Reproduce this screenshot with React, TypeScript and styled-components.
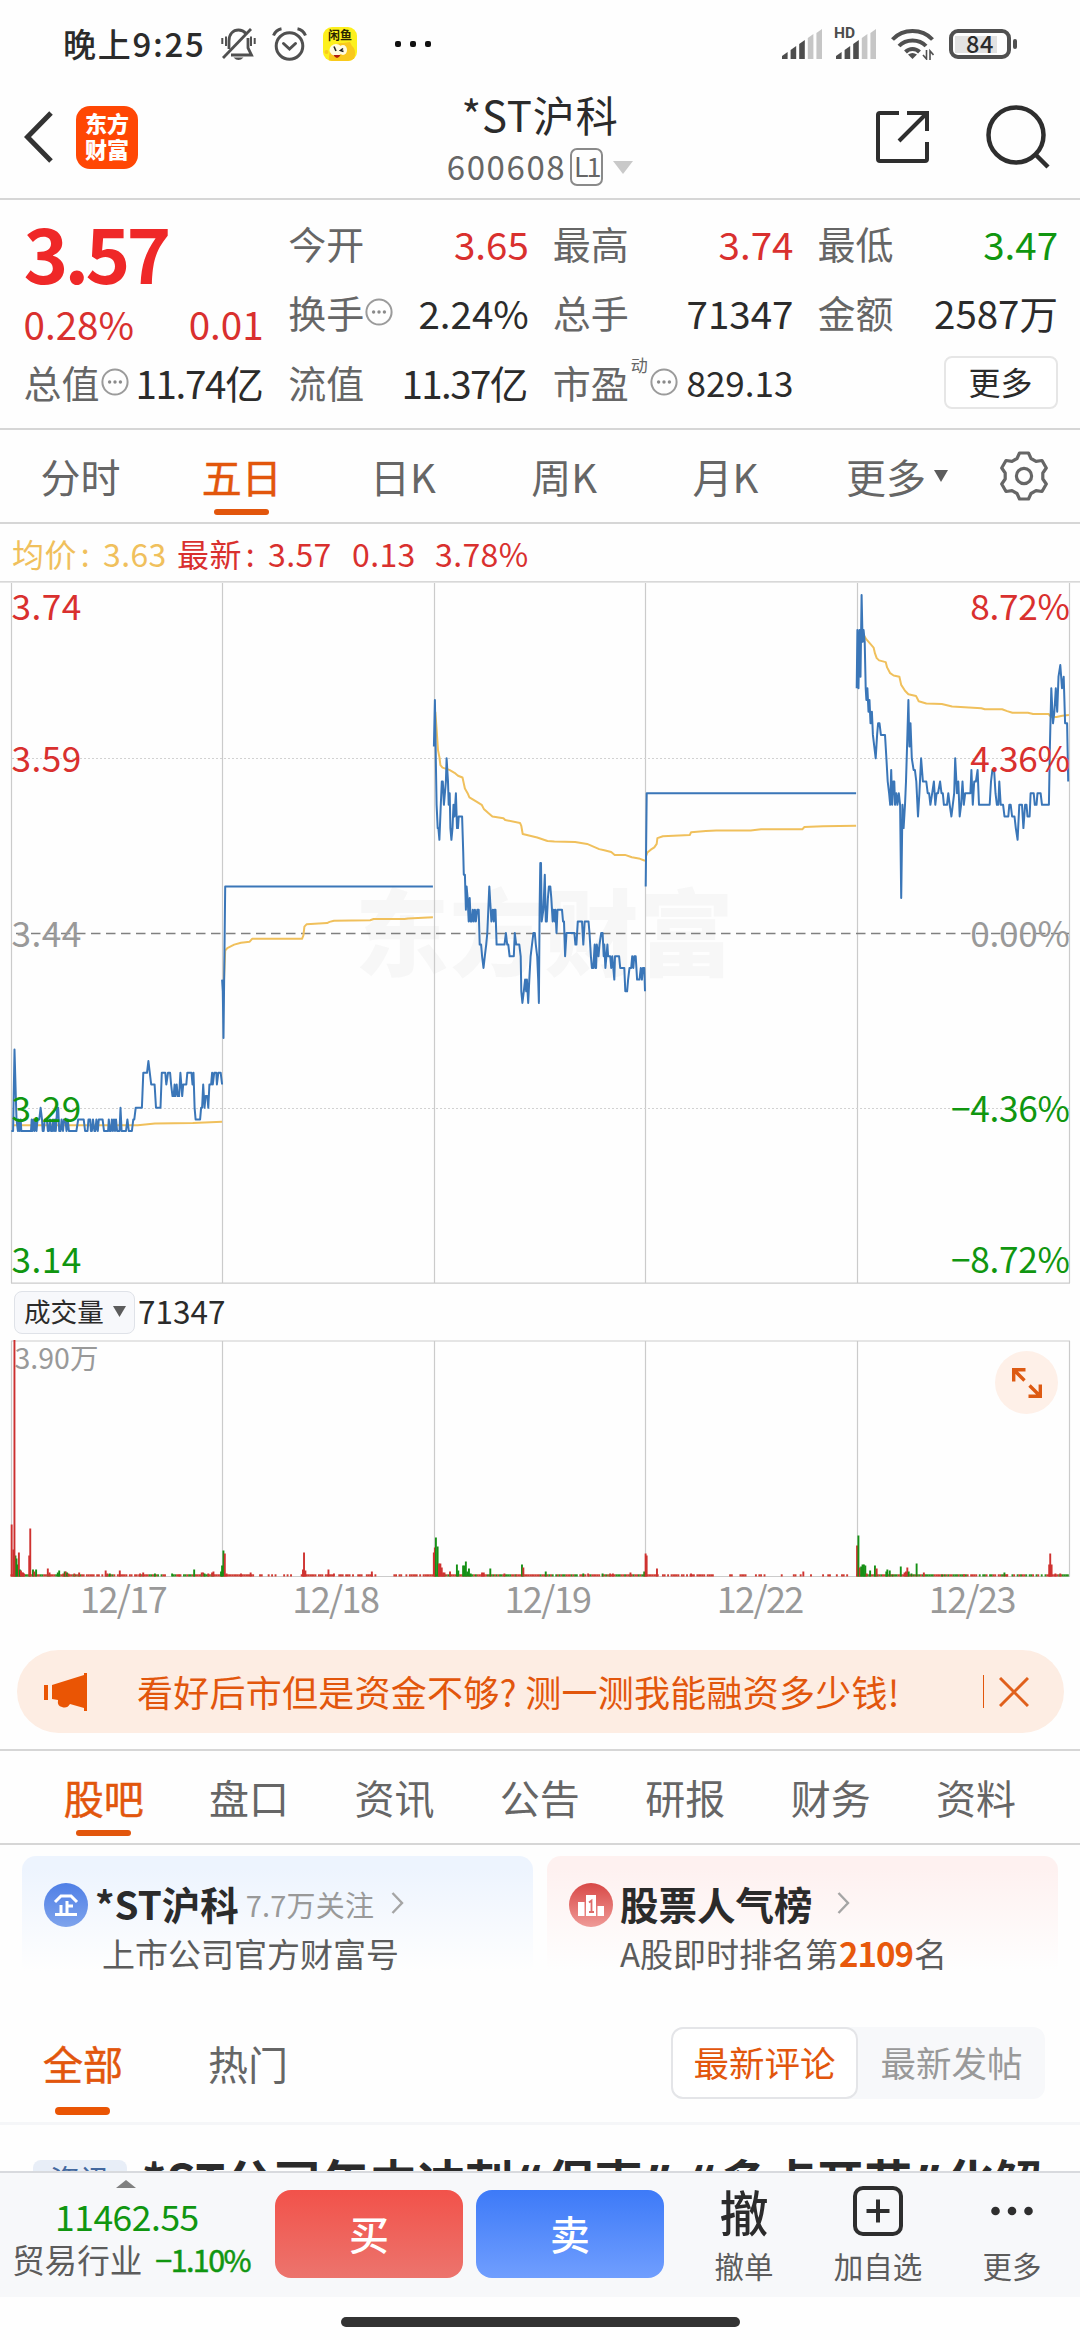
import React from "react";
import styled, { createGlobalStyle } from "styled-components";

const C = {
  ink: "#2b2b2b",
  grey: "#666666",
  light: "#999999",
  line: "#d6d6d6",
  red: "#d9302e",
  green: "#109610",
  orange: "#e2560c",
  blue: "#3a76b8",
  gold: "#f0c05c",
};

const GlobalStyle = createGlobalStyle`
  * { box-sizing: border-box; }
  body {
    margin: 0;
    background: #fefefe;
    font-family: "Noto Sans CJK SC", "Noto Sans", sans-serif;
    color: ${C.ink};
    -webkit-font-smoothing: antialiased;
  }
  svg { display: block; flex: none; }
`;

const Screen = styled.div`
  width: 1080px;
  height: 2340px;
  overflow: hidden;
  display: flex;
  flex-direction: column;
  background: #fefefe;
  white-space: nowrap;
`;

/* ---------- status bar ---------- */
const StatusBar = styled.div`
  height: 88px;
  flex: none;
  display: flex;
  align-items: center;
  padding: 0 63px;
`;
const Clock = styled.span`
  width: 158px;
  font-size: 33px;
  font-weight: 500;
  line-height: 40px;
  padding-bottom: 3px;
  letter-spacing: 1.7px;
`;
const StatusIcons = styled.div<{ $gap: number }>`
  display: flex;
  align-items: center;
  gap: ${(p) => p.$gap}px;
`;
const AppBadge = styled.div`
  width: 34px;
  height: 34px;
  border-radius: 9px;
  background: #fdf01d;
  display: flex;
  flex-direction: column;
  align-items: center;
  overflow: hidden;
`;
const AppBadgeName = styled.span`
  font-size: 12px;
  line-height: 12px;
  font-weight: 700;
  color: #2a2600;
  margin-top: 2px;
`;
const MoreDots = styled.div`
  display: flex;
  gap: 9px;
  margin-left: 38px;
  & > i {
    width: 6px;
    height: 6px;
    border-radius: 2px;
    background: #111;
  }
`;
const StatusRight = styled.div`
  margin-left: auto;
  display: flex;
  align-items: center;
`;
const HdSignal = styled.div`
  position: relative;
  margin: 0 14px 0 13px;
`;
const HdMark = styled.span`
  position: absolute;
  left: -2px;
  top: -3px;
  font: 700 15.5px/15px Roboto, sans-serif;
  color: #4d4d4d;
`;
const Battery = styled.div`
  width: 62px;
  height: 30px;
  margin: 0 2px 0 15px;
  border: 4px solid #505050;
  border-radius: 9px;
  display: flex;
  align-items: center;
  justify-content: center;
  font-size: 23.5px;
  line-height: 22px;
  font-weight: 500;
  letter-spacing: 0.6px;
  padding-bottom: 2px;
  background: linear-gradient(90deg, #e2e2e2 0 42px, transparent 42px) 2px 3px / 42px 17px no-repeat;
`;
const BatteryCap = styled.i`
  width: 4px;
  height: 10px;
  border-radius: 2px;
  background: #505050;
`;

/* ---------- title bar ---------- */
const TitleBar = styled.header`
  height: 112px;
  flex: none;
  display: grid;
  grid-template-columns: 300px 1fr 300px;
  border-bottom: 2px solid ${C.line};
`;
const TitleLeft = styled.div`
  display: flex;
  align-items: center;
  padding: 0 0 12px 24px;
  gap: 23px;
`;
const BrandLogo = styled.div`
  width: 62px;
  height: 63px;
  border-radius: 14px;
  background: #ff4704;
  color: #fff;
  font-size: 22px;
  font-weight: 900;
  line-height: 26px;
  padding: 3px 0 0 9px;
  white-space: pre;
`;
const TitleCenter = styled.div`
  display: flex;
  flex-direction: column;
  align-items: center;
`;
const StockName = styled.h1`
  margin: 0;
  font-size: 42px;
  line-height: 52px;
  font-weight: 400;
  letter-spacing: 0.8px;
`;
const CodeRow = styled.div`
  display: flex;
  align-items: center;
  height: 38px;
  margin-top: 8px;
  color: ${C.grey};
  font-size: 33px;
`;
const Code = styled.span`
  line-height: 38px;
  padding-bottom: 3px;
  letter-spacing: 1.6px;
`;
const LevelTag = styled.span`
  width: 33px;
  height: 38px;
  margin: 0 10px 0 4px;
  border: 2px solid #8a8a8a;
  border-radius: 7px;
  font-size: 27px;
  line-height: 31px;
  text-align: center;
  letter-spacing: -2px;
`;
const TitleRight = styled.div`
  display: flex;
  align-items: center;
  justify-content: flex-end;
  gap: 56px;
  padding: 0 30px 12px 0;
`;

/* ---------- quote panel ---------- */
const QuotePanel = styled.section`
  height: 230px;
  flex: none;
  display: grid;
  grid-template-columns: repeat(4, 1fr);
  column-gap: 24.5px;
  padding: 8px 22.5px 0 23.5px;
  border-bottom: 2px solid ${C.line};
`;
const QuoteColumn = styled.div`
  display: flex;
  flex-direction: column;
`;
const Cell = styled.div`
  height: 69.5px;
  display: flex;
  align-items: center;
  font-size: 38px;
  line-height: 60px;
`;
const Label = styled.span`
  color: ${C.grey};
  margin-right: 1px;
`;
const Value = styled.span<{ $color?: string; $size?: number; $track?: number }>`
  margin-left: auto;
  color: ${(p) => p.$color ?? C.ink};
  font-size: ${(p) => p.$size ?? 38.5}px;
  letter-spacing: ${(p) => p.$track ?? 0}px;
  margin-right: ${(p) => -(p.$track ?? 0.5)}px;
`;
const Price = styled.div`
  height: 87px;
  font-size: 76px;
  line-height: 87px;
  font-weight: 700;
  color: #ef2828;
  letter-spacing: -3.8px;
`;
const ChangeRow = styled.div`
  height: 52px;
  padding-top: 5px;
  display: flex;
  justify-content: space-between;
  font-size: 38.6px;
  line-height: 46px;
  color: ${C.red};
`;
const DynMark = styled.sup`
  font-size: 17px;
  line-height: 20px;
  align-self: flex-start;
  margin: 8px 2px 0 1px;
  color: ${C.grey};
`;
const MoreButton = styled.button`
  margin: 9px 0 0 auto;
  width: 114px;
  height: 53px;
  border: 2px solid #e6e6e6;
  border-radius: 8px;
  background: #fff;
  color: ${C.ink};
  font: inherit;
  font-size: 32px;
  line-height: 40px;
  padding: 0 0 4px;
`;

/* ---------- tabs ---------- */
const PeriodTabs = styled.nav`
  height: 94px;
  flex: none;
  display: flex;
  border-bottom: 2px solid ${C.line};
`;
const SectionTabs = styled.nav`
  height: 96px;
  flex: none;
  display: flex;
  padding: 0 31px;
  border-top: 2px solid ${C.line};
  border-bottom: 2px solid ${C.line};
`;
const Tab = styled.div<{ $width: number; $on?: boolean }>`
  width: ${(p) => p.$width}px;
  display: flex;
  flex-direction: column;
  align-items: center;
  color: ${(p) => (p.$on ? C.orange : C.grey)};
  font-size: 40px;
  line-height: 92px;
  -webkit-text-stroke: ${(p) => (p.$on ? 0.5 : 0)}px ${C.orange};
  &::after {
    content: "";
    width: 55px;
    height: 6px;
    margin-top: -13px;
    border-radius: 3px;
    background: ${(p) => (p.$on ? C.orange : "transparent")};
  }
`;
const TabMore = styled.div`
  display: flex;
  align-items: center;
  margin-left: 40px;
  width: 154px;
  gap: 8px;
  font-size: 40px;
  line-height: 92px;
  color: ${C.grey};
`;
const GearSlot = styled.div`
  padding-top: 21px;
`;

/* ---------- chart ---------- */
const Legend = styled.div`
  height: 57px;
  flex: none;
  display: flex;
  padding-left: 12px;
  font-size: 32px;
  line-height: 58px;
  color: ${C.red};
  letter-spacing: 0.4px;
`;
const LegendItem = styled.span<{ $width: number; $color?: string }>`
  width: ${(p) => p.$width}px;
  color: ${(p) => p.$color ?? C.red};
`;
const Colon = styled.span`
  padding-left: 4px;
`;
const Plot = styled.svg`
  flex: none;
`;
const VolumeHead = styled.div`
  height: 56px;
  flex: none;
  display: flex;
  align-items: center;
  padding: 0 14px;
  font-size: 31.5px;
  line-height: 40px;
`;
const IndicatorSelect = styled.div`
  width: 121px;
  height: 43px;
  margin-right: 3px;
  padding: 0 0 2px 9px;
  display: flex;
  align-items: center;
  gap: 9px;
  border: 1.5px solid #dfe2e8;
  border-radius: 8px;
  background: #f7f8fb;
  font-size: 26.6px;
`;
const VolumeValue = styled.span`
  padding-bottom: 4px;
`;
const VolumeArea = styled.div`
  position: relative;
  height: 238px;
  flex: none;
`;
const ExpandButton = styled.div`
  position: absolute;
  left: 995px;
  top: 11px;
  width: 63px;
  height: 63px;
  border-radius: 50%;
  background: #fef0e8;
  display: grid;
  place-items: center;
`;
const DateAxis = styled.div`
  height: 72px;
  flex: none;
  display: grid;
  grid-template-columns: repeat(5, 212.2px);
  padding-left: 17px;
  font-size: 36px;
  line-height: 39px;
  color: ${C.light};
  text-align: center;
  letter-spacing: -1.6px;
`;

/* ---------- banner ---------- */
const Banner = styled.div`
  height: 83px;
  flex: none;
  margin: 0 16px 16px 17px;
  border-radius: 42px;
  background: #fdede3;
  display: flex;
  align-items: center;
  padding: 0 35px 0 27px;
  color: ${C.orange};
`;
const BannerText = styled.span`
  flex: 1;
  margin-left: 50px;
  font-size: 36px;
  line-height: 60px;
  padding-bottom: 1px;
  letter-spacing: 0.25px;
`;
const BannerRule = styled.i`
  width: 1.5px;
  height: 33px;
  margin-right: 15px;
  background: ${C.orange};
`;

/* ---------- entry cards ---------- */
const Cards = styled.div`
  flex: none;
  height: 182px;
  display: grid;
  grid-template-columns: 511px 511px;
  column-gap: 14px;
  padding: 11px 22px 0;
`;
const Card = styled.div<{ $tint: string }>`
  height: 122px;
  border-radius: 14px;
  background: linear-gradient(180deg, ${(p) => p.$tint} 10%, #fefefe 94%);
  padding: 17px 22px 0;
`;
const CardHead = styled.div`
  height: 60px;
  display: flex;
  align-items: center;
`;
const RoundIcon = styled.div<{ $from: string; $to: string }>`
  width: 44px;
  height: 44px;
  margin: 3px 7px 0 0;
  border-radius: 50%;
  background: linear-gradient(180deg, ${(p) => p.$from}, ${(p) => p.$to});
  display: grid;
  place-items: center;
`;
const CardTitle = styled.span`
  font-size: 38.5px;
  line-height: 60px;
  font-weight: 700;
`;
const CardMeta = styled.span`
  margin: 0 17px 0 7px;
  padding-top: 2px;
  font-size: 29px;
  letter-spacing: 0.2px;
  color: ${C.light};
`;
const CardSub = styled.div`
  padding-left: 58px;
  margin-top: -2px;
  font-size: 33px;
  line-height: 44px;
  color: #5c5c5c;
`;
const RankCardSub = styled(CardSub)`
  padding-left: 51px;
`;
const Rank = styled.b`
  color: #e8590c;
  letter-spacing: -1px;
  margin: 0 1px;
`;

/* ---------- feed ---------- */
const FilterRow = styled.div`
  height: 98px;
  flex: none;
  display: flex;
  align-items: flex-start;
  border-bottom: 3px solid #f5f6f8;
  padding: 0 35px 0 43px;
`;
const Filter = styled.div<{ $on?: boolean }>`
  width: 165px;
  height: 93px;
  font-size: 40px;
  line-height: 72px;
  -webkit-text-stroke: ${(p) => (p.$on ? 0.5 : 0)}px ${C.orange};
  color: ${(p) => (p.$on ? C.orange : C.grey)};
  &::after {
    content: "";
    display: block;
    width: 55px;
    height: 8px;
    margin: 8px 0 0 12px;
    border-radius: 4px;
    background: ${(p) => (p.$on ? "#ea5504" : "transparent")};
  }
`;
const Segment = styled.div`
  width: 374px;
  height: 72px;
  margin-left: auto;
  border-radius: 12px;
  background: #f7f8fa;
  display: grid;
  grid-template-columns: 1fr 1fr;
`;
const SegmentItem = styled.div<{ $on?: boolean }>`
  text-align: center;
  font-size: 35.5px;
  line-height: 65px;
  border-radius: 12px;
  border: 2px solid ${(p) => (p.$on ? "#e4e5e8" : "transparent")};
  background: ${(p) => (p.$on ? "#fff" : "transparent")};
  color: ${(p) => (p.$on ? C.orange : C.light)};
`;
const Feed = styled.div`
  height: 46px;
  flex: none;
  overflow: hidden;
  display: flex;
  align-items: flex-start;
  padding: 35px 0 0 33px;
`;
const FeedTag = styled.span`
  width: 94px;
  height: 52px;
  border-radius: 8px;
  background: #e8eef7;
  color: #44699f;
  font-size: 30px;
  line-height: 36px;
  text-align: center;
`;
const FeedTitle = styled.span`
  margin: -11px 0 0 15px;
  font-size: 48px;
  line-height: 60px;
  font-weight: 700;
`;
const Quoted = styled.span`
  font-family: "Noto Sans", sans-serif;
  padding: 0 6px;
`;

/* ---------- bottom bar ---------- */
const BottomBar = styled.footer`
  height: 126px;
  flex: none;
  display: flex;
  border-top: 2px solid #d8dade;
  background: #f7f8fa;
`;
const IndexBox = styled.div`
  width: 275px;
  display: flex;
  flex-direction: column;
  padding: 7px 0 0 12px;
`;
const IndexValue = styled.div`
  margin: 6px 0 0 43px;
  font-size: 35.5px;
  line-height: 44px;
  color: ${C.green};
  letter-spacing: -0.5px;
`;
const IndexRow = styled.div`
  display: flex;
  align-items: center;
  gap: 13px;
  font-size: 32.6px;
  line-height: 44px;
  margin-top: -1px;
  color: #5c5c5c;
`;
const IndexChange = styled.span`
  font-size: 30.5px;
  color: ${C.green};
  letter-spacing: -1.6px;
  -webkit-text-stroke: 0.5px ${C.green};
`;
const TradeButton = styled.div<{ $from: string; $to: string }>`
  width: 188px;
  height: 88px;
  margin: 17px 13px 0 0;
  border-radius: 16px;
  background: linear-gradient(180deg, ${(p) => p.$from}, ${(p) => p.$to});
  color: #fff;
  font-size: 40px;
  font-weight: 500;
  line-height: 86px;
  text-align: center;
`;
const Action = styled.div`
  width: 134px;
  display: flex;
  flex-direction: column;
  align-items: center;
  font-size: 29.5px;
  line-height: 40px;
  color: #5c5c5c;
`;
const ActionIcon = styled.div`
  height: 72px;
  display: flex;
  align-items: center;
  padding-top: 4px;
  font-size: 49px;
  font-weight: 500;
  line-height: 60px;
  color: ${C.ink};
`;
const HomeArea = styled.div`
  flex: 1;
  display: flex;
  justify-content: center;
  padding-top: 20px;
`;
const HomeBar = styled.i`
  width: 399px;
  height: 10px;
  border-radius: 5px;
  background: #333;
`;

/* ---------- icons ---------- */
const Signal = () => (
  <svg width="41" height="30" viewBox="0 0 41 30">
    {[7, 13, 19, 25, 30].map((h, i) => (
      <path
        key={h}
        d={`M${i * 8.6} 30V${30 - h + 4}L${i * 8.6 + 5.6} ${30 - h}V30Z`}
        fill={i < 3 ? "#4d4d4d" : "#c6c6c6"}
      />
    ))}
  </svg>
);
const Triangle = ({ w, h, color }: { w: number; h: number; color: string }) => (
  <svg width={w} height={h}>
    <path d={`M0 0H${w}L${w / 2} ${h}Z`} fill={color} />
  </svg>
);
const Info = () => (
  <svg width="28" height="28" viewBox="0 0 28 28">
    <circle cx="14" cy="14" r="12.6" fill="none" stroke="#9b9b9b" strokeWidth="2" />
    {[8.6, 14, 19.4].map((x) => (
      <circle key={x} cx={x} cy="14" r="1.7" fill="#8a8a8a" />
    ))}
  </svg>
);
const Chevron = () => (
  <svg width="13" height="22" viewBox="0 0 13 22" fill="none" stroke="#a5a5a5" strokeWidth="2.4">
    <path d="M1.5 1L11 11L1.5 21" />
  </svg>
);

/* ---------- chart data ---------- */
// Prices are [time, cents away from 3.44]; time runs 2.904 units per pixel.
const UNIT = 2.904;
type Point = [number, number];
const parse = (s: string): Point[] =>
  s.trim().split(/\s+/).map((p) => p.split(",").map(Number) as Point);

const PRICE = [
  `33,-17 38,-17 42,-10 46,-14 48,-16 52,-17 54,-16 57,-17 60,-16 62,-17 90,-17 92,-16 94,-17 98,-16 100,-17 103,-16 106,-17 109,-16 114,-16 118,-15 122,-16 124,-17 127,-17 130,-16 136,-16 139,-17 142,-17 145,-16 148,-17 152,-17 154,-16 157,-17 160,-16 162,-17 166,-15 169,-15 172,-17 176,-17 179,-16 183,-17 186,-16 190,-16 193,-17 197,-16 200,-17 222,-17 227,-16 243,-16 247,-17 254,-17 257,-16 262,-16 264,-17 267,-17 270,-16 274,-17 277,-17 280,-16 284,-17 287,-16 298,-16 302,-17 314,-17 316,-16 319,-17 322,-17 325,-16 328,-17 331,-16 334,-17 337,-16 340,-17 347,-17 350,-15 353,-17 366,-17 370,-16 374,-17 383,-17 387,-16 390,-16 394,-15 412,-15 416,-12 427,-12 431,-11 435,-12 439,-13 449,-13 453,-15 466,-15 470,-12 480,-12 483,-13 488,-12 494,-12 497,-13 501,-14 504,-14 507,-13 509,-14 513,-13 516,-14 520,-14 524,-12 529,-14 532,-13 541,-13 544,-12 556,-12 559,-13 562,-12 565,-15 568,-16 581,-16 584,-15 587,-15 590,-13 594,-15 597,-14 602,-14 605,-15 608,-13 613,-13 616,-12 618,-13 622,-12 628,-12 630,-13 634,-12 641,-12 645,-13`,
  `645,-4 647,-5 649,-9 654,4 1257,4`,
  `1260,16 1263,20 1266,14 1268,11 1271,9 1273,9 1276,8 1280,11 1283,13 1286,13 1289,11 1292,12 1295,13 1297,15 1301,13 1303,11 1306,12 1308,9 1311,8 1314,9 1317,11 1320,10 1324,12 1327,9 1330,9 1332,10 1342,10 1345,7 1347,5 1350,5 1353,2 1355,4 1358,3 1361,1 1364,3 1367,1 1370,1 1373,2 1376,1 1379,2 1382,1 1386,2 1390,2 1393,-1 1397,-1 1400,-2 1404,-3 1408,-2 1412,-1 1415,0 1418,2 1421,4 1425,2 1427,1 1431,2 1434,1 1436,2 1439,2 1442,-1 1465,-1 1469,0 1473,-1 1476,-1 1480,-2 1492,-2 1495,0 1499,-1 1508,-1 1512,-2 1514,-5 1517,-6 1521,-5 1525,-4 1528,-5 1530,-4 1534,-6 1537,-4 1541,-2 1545,-1 1549,0 1553,0 1556,-1 1560,-2 1563,-4 1565,-6 1567,2 1569,6 1571,6 1573,1 1578,2 1582,5 1585,1 1588,1 1591,3 1594,4 1598,4 1601,3 1605,1 1608,2 1611,1 1613,2 1616,0 1619,2 1632,2 1635,1 1638,1 1641,-2 1645,0 1668,0 1671,-1 1674,-1 1678,1 1690,1 1694,-1 1698,1 1709,1 1712,0 1716,-2 1719,-3 1723,-3 1727,-1 1729,-3 1731,-3 1733,-1 1738,-2 1741,-1 1746,0 1750,0 1753,-2 1755,-1 1758,-3 1761,-2 1764,-1 1766,-2 1772,-2 1775,-3 1778,-2 1781,-3 1784,-4 1786,-2 1798,-2 1801,-3 1813,-3 1816,-5 1821,-5 1824,-4 1828,-3 1833,-3 1836,-2 1839,-3 1842,-2 1846,-2 1850,-4 1857,-4 1861,-3 1864,-4 1867,-3 1871,-3 1873,-5`,
  `1875,4 1878,12 2486,12`,
  `2488,21 2490,26 2493,21 2496,26 2499,22 2502,29 2505,25 2508,26 2511,25 2514,21 2516,20 2519,21 2522,19 2525,20 2528,18 2532,19 2535,17 2539,16 2543,15 2547,17 2550,18 2554,18 2558,17 2570,17 2574,15 2578,13 2582,12 2585,11 2588,14 2591,11 2594,13 2597,13 2599,11 2603,12 2606,11 2610,12 2614,11 2617,3 2621,11 2624,9 2628,11 2631,13 2635,17 2638,20 2641,16 2644,18 2648,15 2653,14 2657,14 2661,13 2666,10 2670,12 2675,15 2680,13 2690,13 2694,12 2698,12 2702,11 2707,12 2712,13 2716,11 2720,12 2724,12 2730,13 2734,12 2738,12 2741,11 2750,11 2754,12 2758,11 2763,10 2767,11 2771,12 2774,15 2779,12 2783,13 2787,10 2791,11 2795,13 2799,11 2803,12 2818,12 2821,14 2825,11 2829,13 2834,13 2839,14 2843,11 2874,11 2878,13 2882,14 2887,14 2891,12 2895,11 2899,11 2902,13 2906,11 2913,11 2917,10 2928,10 2931,11 2935,11 2939,10 2946,10 2950,9 2955,8 2960,11 2968,11 2972,9 2977,11 2981,11 2984,10 2990,10 2993,12 3002,12 3005,11 3010,11 3013,12 3022,12 3026,11 3046,11 3049,16 3053,21 3058,18 3062,19 3066,21 3070,19 3074,22 3079,23 3084,21 3089,22 3093,18 3099,18 3102,13`,
].map(parse);

const AVERAGE = [
  `38,-16.5 400,-16.5 450,-16.35 560,-16.3 645,-16.2`,
  `649,-5 654,-1.5 660,-1.3 670,-1.15 680,-1 700,-.83 725,-.75 732,-.5 877,-.5 881,-.2 884,.55 890,.75 950,.85 957,.95 970,1.05 1075,1.1 1085,1.2 1175,1.2 1185,1.25 1257,1.35`,
  `1264,19 1268,17.5 1272,15.7 1276,15.1 1279,14.4 1285,14.2 1305,14 1320,13.75 1330,13.5 1343,13.35 1346,12.95 1350,12.4 1358,12 1363,11.65 1385,11.25 1399,11 1405,10.65 1418,10.3 1430,10 1462,9.85 1467,9.7 1510,9.45 1514,9.2 1518,8.5 1560,8.2 1590,7.9 1610,7.85 1670,7.8 1705,7.65 1725,7.4 1740,7.2 1755,7.1 1775,6.95 1785,6.7 1815,6.7 1835,6.5 1855,6.4 1873,6.2`,
  `1876,6.6 1880,6.9 1890,7.15 1900,7.35 1907,7.65 1909,8.15 1925,8.3 2003,8.4 2007,8.65 2050,8.75 2080,8.8 2180,8.8 2210,8.9 2330,8.9 2336,9.1 2390,9.17 2486,9.2`,
  `2508,25.6 2516,25.2 2525,24.9 2537,24.5 2541,24 2546,23.6 2553,23.4 2572,23.25 2576,22.8 2585,22.3 2595,22.1 2612,22 2617,21.3 2628,20.8 2638,20.5 2660,20.35 2668,19.9 2690,19.7 2735,19.65 2765,19.45 2850,19.3 2860,19.2 2910,19.2 2925,19.05 2940,18.9 2985,18.9 3000,18.8 3045,18.8 3052,18.55 3068,18.55 3085,18.65 3104,18.7`,
].map(parse);

const CHART_TOP = 581;
const MID_Y = 933 - CHART_TOP;
const CENT = 11.65;
const toPolyline = (points: Point[]) =>
  points.map(([x, v]) => `${(x / UNIT).toFixed(1)},${(MID_Y - v * CENT).toFixed(1)}`).join(" ");

const DAY_X = [11.5, 222.5, 434.5, 645.5, 857.5, 1069.5];

const SCALE = [
  { y: 39, price: "3.74", pct: "8.72%", color: C.red },
  { y: 190.5, price: "3.59", pct: "4.36%", color: C.red },
  { y: 366, price: "3.44", pct: "0.00%", color: C.light },
  { y: 540.5, price: "3.29", pct: "−4.36%", color: C.green },
  { y: 692, price: "3.14", pct: "−8.72%", color: C.green },
];

// Volume bars: [time, height, 1 = up / 0 = down]
const VOLUME: [number, number, number][] = [
  [34, 52, 1], [39, 27, 1], [45, 21, 0], [48, 18, 0], [51, 12, 0], [55, 24, 1], [58, 7, 0], [61, 6, 1], [64, 4, 1],
  [67, 4, 1], [70, 3, 1], [85, 21, 1], [88, 48, 1], [96, 7, 0], [100, 5, 1], [105, 7, 0], [139, 8, 1], [144, 4, 1], [168, 4, 0],
  [172, 6, 0], [184, 3, 1], [188, 5, 0], [191, 5, 1], [195, 4, 0], [199, 3, 1], [216, 3, 1], [230, 4, 1], [307, 6, 1], [312, 3, 1], [319, 3, 0], [348, 6, 1],
  [407, 3, 1], [416, 4, 1], [450, 3, 0], [500, 3, 0], [521, 2, 1], [564, 7, 0], [586, 4, 1], [590, 4, 1], [594, 3, 0],
  [605, 3, 1], [616, 4, 1], [620, 5, 1], [642, 5, 0], [645, 11, 0], [649, 26, 0], [653, 23, 1], [658, 3, 1],
  [700, 3, 1], [728, 4, 1], [880, 7, 1], [883, 24, 1], [887, 6, 1], [954, 7, 1], [970, 3, 1], [1080, 5, 1],
  [1260, 24, 1], [1263, 29, 1], [1266, 39, 0], [1271, 30, 0], [1275, 13, 1], [1279, 13, 1], [1283, 9, 1], [1287, 4, 1], [1291, 4, 1], [1307, 5, 1],
  [1327, 12, 0], [1331, 6, 0], [1345, 11, 0], [1349, 11, 0], [1353, 15, 0], [1357, 5, 0], [1362, 8, 0], [1367, 3, 0], [1400, 4, 1],
  [1405, 4, 1], [1424, 8, 0], [1465, 3, 1], [1516, 12, 0], [1520, 9, 1], [1585, 5, 0], [1694, 3, 0], [1708, 3, 1], [1750, 3, 0], [1772, 3, 1], [1780, 3, 1],
  [1831, 4, 1], [1871, 5, 0], [1875, 23, 1], [1878, 21, 1], [1908, 8, 1], [2007, 3, 1], [2333, 5, 1],
  [2489, 31, 1], [2493, 41, 0], [2497, 9, 1], [2501, 10, 0], [2505, 12, 0], [2509, 12, 0], [2513, 11, 0], [2517, 3, 1], [2527, 6, 0], [2541, 11, 0], [2546, 8, 1],
  [2574, 5, 0], [2577, 7, 0], [2584, 6, 0], [2592, 2, 0], [2616, 10, 0], [2627, 4, 1], [2631, 5, 1], [2635, 9, 1], [2639, 5, 0], [2647, 3, 0],
  [2662, 13, 0], [2683, 4, 1], [2736, 2, 0], [2917, 4, 0], [2924, 2, 1], [3047, 12, 1], [3050, 23, 1], [3054, 12, 1], [3065, 3, 1], [3079, 3, 1],
];
// Quiet trading: [start, end, share of minutes traded, share of falling minutes]
const QUIET: [number, number, number, number][] = [
  [33, 245, 1, 0.3], [247, 400, 0.8, 0.15], [404, 645, 0.9, 0.4], [645, 735, 1, 0], [735, 870, 0.25, 0],
  [876, 970, 0.95, 0], [975, 1095, 0.55, 0], [1145, 1260, 0.75, 0], [1262, 1500, 1, 0.4], [1500, 1875, 0.93, 0.3], [1875, 1915, 1, 0],
  [1920, 2075, 0.75, 0], [2095, 2470, 0.3, 0], [2489, 2800, 1, 0.4], [2800, 3030, 0.75, 0.4], [3036, 3104, 1, 0.45],
];
const noise = (n: number) => {
  const v = Math.sin(n * 12.9898) * 43758.5453;
  return v - Math.floor(v);
};
const BASE_Y = 236.5;

const PriceChart = () => (
  <Plot width="1080" height="703" viewBox="0 0 1080 703">
    <text x="355" y="388" fontSize="94" letterSpacing="0.8" fontWeight="900" fill="#f7f7f7">东方财富</text>
    <g stroke="#cbcbcb" strokeWidth="1.2">
      <path d="M0 .8H1080M11 702.2H1070" />
      {DAY_X.map((x) => (
        <path key={x} d={`M${x} 2V702`} />
      ))}
      <path d="M12 177.5H1069M12 527.5H1069" strokeDasharray="2 2" stroke="#d2d2d2" />
    </g>
    <path
      d={`M16 ${MID_Y + 0.5}H1069`}
      stroke="#808080"
      strokeWidth="1.4"
      strokeDasharray="9.500 5.500"
    />
    <g fill="none" strokeWidth="2" strokeLinejoin="round">
      {AVERAGE.map((p, i) => (
        <polyline key={i} points={toPolyline(p)} stroke={C.gold} />
      ))}
      {PRICE.map((p, i) => (
        <polyline key={i} points={toPolyline(p)} stroke={C.blue} />
      ))}
    </g>
    <g fontSize="35.2">
      {SCALE.map((s) => (
        <React.Fragment key={s.y}>
          <text x="11.500" y={s.y} fill={s.color} letterSpacing="0.5">{s.price}</text>
          <text x="1069.500" y={s.y} fill={s.color} letterSpacing="-0.3" textAnchor="end">{s.pct}</text>
        </React.Fragment>
      ))}
    </g>
  </Plot>
);

const VolumeChart = () => (
  <Plot width="1080" height="238" viewBox="0 0 1080 238">
    <g stroke="#cbcbcb" strokeWidth="1.2">
      <path d={`M11 1H1070M11 ${BASE_Y}H1070`} />
      {DAY_X.map((x) => (
        <path key={x} d={`M${x} 1V${BASE_Y}`} />
      ))}
    </g>
    <text x="14.500" y="29" fontSize="28.500" fill={C.light}>3.90万</text>
    {QUIET.flatMap(([from, to, density, falling]) => {
      const bars: React.ReactElement[] = [];
      for (let t = from; t < to; t += 5) {
        if (noise(t) > density) continue;
        bars.push(
          <rect
            key={t}
            x={t / UNIT - 0.9}
            y={BASE_Y - 2.2}
            width="1.9"
            height="2.2"
            fill={noise(t + 0.5) < falling ? "#2a8f1c" : "#cf3a30"}
          />
        );
      }
      return bars;
    })}
    {VOLUME.map(([t, h, up]) => (
      <rect key={t} x={t / UNIT - 1} y={BASE_Y - h} width="1.9" height={h} fill={up ? "#cf3230" : "#159015"} />
    ))}
    <rect x="13.5" y="0" width="1.9" height={BASE_Y} fill="#cc2f2f" />
  </Plot>
);

const PERIODS = ["分时", "五日", "日K", "周K", "月K"];
const SECTIONS = ["股吧", "盘口", "资讯", "公告", "研报", "财务", "资料"];
const DATES = ["12/17", "12/18", "12/19", "12/22", "12/23"];

export default function App() {
  return (
    <Screen>
      <GlobalStyle />
      <StatusBar>
        <Clock>晚上9:25</Clock>
        <StatusIcons $gap={16}>
          <svg width="35" height="33" viewBox="0 0 35 33" fill="none" stroke="#505050" strokeWidth="2.8">
            <path d="M8 21V13C8 6 12 2 17.5 2C20.5 2 23 3.2 25 5.5M27 10V20L30.5 27H10" />
            <path d="M30 1L2 30" />
            <path d="M1.3 10V16M5 8.5V18M30 8.5V18M33.7 10V16" strokeWidth="2" />
            <path d="M12.5 29.5H22.5Q17.5 34.5 12.5 29.5Z" fill="#505050" stroke="none" />
          </svg>
          <svg width="35" height="34" viewBox="0 0 35 34" fill="none" stroke="#505050" strokeWidth="3">
            <circle cx="17.5" cy="19" r="13.3" />
            <path d="M11.5 16.5L17.5 22L23.5 16.5" strokeLinecap="round" />
            <path d="M1.5 8.5C3 5 6 2.5 9.5 1.8M33.5 8.5C32 5 29 2.5 25.5 1.8" />
          </svg>
          <AppBadge>
            <AppBadgeName>闲鱼</AppBadgeName>
            <svg width="34" height="20" viewBox="0 0 34 20">
              <path d="M6 20C5 8 12 1 20 2L27 1L29 5C33 8 33 15 30 20Z" fill="#f9c91c" />
              <ellipse cx="13" cy="9" rx="6.5" ry="6" fill="#fffbe0" />
              <ellipse cx="20" cy="9" rx="4" ry="5" fill="#fffbe0" />
              <path d="M11 5.5L13 10M20 7.5L17.5 9.5L20.5 10.5" stroke="#222" strokeWidth="1.6" fill="none" />
              <path d="M10.5 14H17.5Q14 20 10.5 14Z" fill="#b11c10" />
              <circle cx="3.5" cy="11" r="2" fill="#f9c91c" />
            </svg>
          </AppBadge>
        </StatusIcons>
        <MoreDots>
          <i />
          <i />
          <i />
        </MoreDots>
        <StatusRight>
          <Signal />
          <HdSignal>
            <Signal />
            <HdMark>HD</HdMark>
          </HdSignal>
          <svg width="43" height="32" viewBox="0 0 43 32" fill="none" stroke="#505050" strokeWidth="4">
            <path d="M1.5 11.5C12 .2 31 .2 41.5 11.5M8 18C15 10.500 28 10.500 35 18" />
            <path d="M14.500 24C18.500 20 24.500 20 28.500 24" />
            <path d="M21.500 31L17 26.500Q21.500 23.500 26 26.500Z" fill="#505050" stroke="none" />
            <path d="M35.500 22V31L32 27M39 32V23L42.500 27" strokeWidth="1.6" />
          </svg>
          <Battery>84</Battery>
          <BatteryCap />
        </StatusRight>
      </StatusBar>

      <TitleBar>
        <TitleLeft>
          <svg width="29" height="52" viewBox="0 0 29 52" fill="none" stroke="#333" strokeWidth="5">
            <path d="M27 2L3.500 26L27 50" />
          </svg>
          <BrandLogo>{"东方\n财富"}</BrandLogo>
        </TitleLeft>
        <TitleCenter>
          <StockName>*ST沪科</StockName>
          <CodeRow>
            <Code>600608</Code>
            <LevelTag>L1</LevelTag>
            <Triangle w={20} h={13} color="#c9c9c9" />
          </CodeRow>
        </TitleCenter>
        <TitleRight>
          <svg width="55" height="54" viewBox="0 0 55 54" fill="none" stroke="#2e2e2e" strokeWidth="4">
            <path d="M24 3H5Q3 3 3 5V49Q3 51 5 51H50Q52 51 52 49V32" />
            <path d="M32 3H52V21M52 3L24 31" />
          </svg>
          <svg width="64" height="64" viewBox="0 0 64 64" fill="none" stroke="#2e2e2e" strokeWidth="4.500">
            <circle cx="30" cy="30" r="27.500" />
            <path d="M49.500 49.500L62 62" />
          </svg>
        </TitleRight>
      </TitleBar>

      <QuotePanel>
        <QuoteColumn>
          <Price>3.57</Price>
          <ChangeRow>
            <span>0.28%</span>
            <span>0.01</span>
          </ChangeRow>
          <Cell>
            <Label>总值</Label>
            <Info />
            <Value $track={-1.3}>11.74亿</Value>
          </Cell>
        </QuoteColumn>
        <QuoteColumn>
          <Cell>
            <Label>今开</Label>
            <Value $color={C.red}>3.65</Value>
          </Cell>
          <Cell>
            <Label>换手</Label>
            <Info />
            <Value>2.24%</Value>
          </Cell>
          <Cell>
            <Label>流值</Label>
            <Value $track={-1.6}>11.37亿</Value>
          </Cell>
        </QuoteColumn>
        <QuoteColumn>
          <Cell>
            <Label>最高</Label>
            <Value $color={C.red}>3.74</Value>
          </Cell>
          <Cell>
            <Label>总手</Label>
            <Value>71347</Value>
          </Cell>
          <Cell>
            <Label>市盈</Label>
            <DynMark>动</DynMark>
            <Info />
            <Value $size={35}>829.13</Value>
          </Cell>
        </QuoteColumn>
        <QuoteColumn>
          <Cell>
            <Label>最低</Label>
            <Value $color={C.green}>3.47</Value>
          </Cell>
          <Cell>
            <Label>金额</Label>
            <Value>2587万</Value>
          </Cell>
          <MoreButton>更多</MoreButton>
        </QuoteColumn>
      </QuotePanel>

      <PeriodTabs>
        {PERIODS.map((name) => (
          <Tab key={name} $width={161.2} $on={name === "五日"}>
            {name}
          </Tab>
        ))}
        <TabMore>
          更多
          <Triangle w={14} h={12} color="#5c5c5c" />
        </TabMore>
        <GearSlot>
          <svg width="48" height="50" viewBox="0 0 48 50" fill="none" stroke="#666" strokeWidth="3.200" strokeLinejoin="round">
            <path d="M19.500 2H28.500L31 7.500L36 10.300L42 9.500L46.300 17L42.800 22V28L46.300 33L42 40.500L36 39.700L31 42.500L28.500 48H19.500L17 42.500L12 39.700L6 40.500L1.700 33L5.200 28V22L1.700 17L6 9.500L12 10.300L17 7.500Z" />
            <circle cx="24" cy="25" r="7.600" />
          </svg>
        </GearSlot>
      </PeriodTabs>

      <Legend>
        <LegendItem $width={91} $color={C.gold}>
          均价<Colon>:</Colon>
        </LegendItem>
        <LegendItem $width={74} $color={C.gold}>3.63</LegendItem>
        <LegendItem $width={91}>
          最新<Colon>:</Colon>
        </LegendItem>
        <LegendItem $width={84}>3.57</LegendItem>
        <LegendItem $width={83}>0.13</LegendItem>
        <LegendItem $width={100}>3.78%</LegendItem>
      </Legend>

      <PriceChart />
      <VolumeHead>
        <IndicatorSelect>
          成交量
          <Triangle w={13} h={11} color="#5c5c5c" />
        </IndicatorSelect>
        <VolumeValue>71347</VolumeValue>
      </VolumeHead>
      <VolumeArea>
        <VolumeChart />
        <ExpandButton>
          <svg width="32" height="32" viewBox="0 0 32 32" fill="none" stroke="#dd5a12" strokeWidth="3.400">
            <path d="M14.500 2.700H2.700V14.500M2.700 2.700L13.500 13.500M17.500 29.300H29.300V17.500M29.300 29.300L18.500 18.500" />
          </svg>
        </ExpandButton>
      </VolumeArea>
      <DateAxis>
        {DATES.map((d) => (
          <span key={d}>{d}</span>
        ))}
      </DateAxis>

      <Banner>
        <svg width="43" height="38" viewBox="0 0 43 38" fill="#ea5504">
          <path d="M0 12H4V27H0ZM8 12L40 2V0H43V38H40V35L26 31Q23 36 18 34Q13 33 14 27L8 26Z" />
        </svg>
        <BannerText>看好后市但是资金不够? 测一测我能融资多少钱!</BannerText>
        <BannerRule />
        <svg width="30" height="30" viewBox="0 0 30 30" fill="none" stroke="#e0601c" strokeWidth="3">
          <path d="M1 1L29 29M29 1L1 29" />
        </svg>
      </Banner>

      <SectionTabs>
        {SECTIONS.map((name) => (
          <Tab key={name} $width={145.4} $on={name === "股吧"}>
            {name}
          </Tab>
        ))}
      </SectionTabs>

      <Cards>
        <Card $tint="#edf4fe">
          <CardHead>
            <RoundIcon $from="#4f7fe6" $to="#7ea3ec">
              <svg width="26" height="24" viewBox="0 0 26 24" fill="none" stroke="#fff" strokeWidth="3">
                <path d="M2 9L8 3H18L24 9M14 8V20M14 13H20M8 12V20M2 21.500H24" />
              </svg>
            </RoundIcon>
            <CardTitle>*ST沪科</CardTitle>
            <CardMeta>7.7万关注</CardMeta>
            <Chevron />
          </CardHead>
          <CardSub>上市公司官方财富号</CardSub>
        </Card>
        <Card $tint="#fef1f0">
          <CardHead>
            <RoundIcon $from="#d84846" $to="#ef9a97">
              <svg width="26" height="22" viewBox="0 0 26 22" fill="#fff">
                <path d="M0 8H6.500V22H0ZM8 1H18V22H8ZM19.500 12H26V22H19.500Z" />
                <path d="M11 8.500L13.500 6.500V18M11 18H16" fill="none" stroke="#de6a68" strokeWidth="1.800" />
              </svg>
            </RoundIcon>
            <CardTitle>股票人气榜</CardTitle>
            <CardMeta />
            <Chevron />
          </CardHead>
          <RankCardSub>
            A股即时排名第<Rank>2109</Rank>名
          </RankCardSub>
        </Card>
      </Cards>

      <FilterRow>
        <Filter $on>全部</Filter>
        <Filter>热门</Filter>
        <Segment>
          <SegmentItem $on>最新评论</SegmentItem>
          <SegmentItem>最新发帖</SegmentItem>
        </Segment>
      </FilterRow>
      <Feed>
        <FeedTag>资讯</FeedTag>
        <FeedTitle>
          *ST公司年内冲刺<Quoted>“</Quoted>保壳<Quoted>”</Quoted> <Quoted>“</Quoted>多点开花<Quoted>”</Quoted>化解
        </FeedTitle>
      </Feed>

      <BottomBar>
        <IndexBox>
          <svg width="124" height="8" viewBox="0 0 124 8">
            <path d="M104 8L114 0L124 8Z" fill="#808080" />
          </svg>
          <IndexValue>11462.55</IndexValue>
          <IndexRow>
            贸易行业<IndexChange>−1.10%</IndexChange>
          </IndexRow>
        </IndexBox>
        <TradeButton $from="#f2524a" $to="#ec746d">买</TradeButton>
        <TradeButton $from="#3d7af8" $to="#709efe">卖</TradeButton>
        <Action>
          <ActionIcon>撤</ActionIcon>
          撤单
        </Action>
        <Action>
          <ActionIcon>
            <svg width="50" height="50" viewBox="0 0 50 50" fill="none" stroke="#2e2e2e" strokeWidth="4">
              <rect x="2" y="2" width="46" height="46" rx="8" />
              <path d="M25 13.500V36.500M13.500 25H36.500" />
            </svg>
          </ActionIcon>
          加自选
        </Action>
        <Action>
          <ActionIcon>
            <svg width="42" height="10" viewBox="0 0 42 10" fill="#2e2e2e">
              <circle cx="4.500" cy="5" r="4.300" />
              <circle cx="21" cy="5" r="4.300" />
              <circle cx="37.500" cy="5" r="4.300" />
            </svg>
          </ActionIcon>
          更多
        </Action>
      </BottomBar>
      <HomeArea>
        <HomeBar />
      </HomeArea>
    </Screen>
  );
}
